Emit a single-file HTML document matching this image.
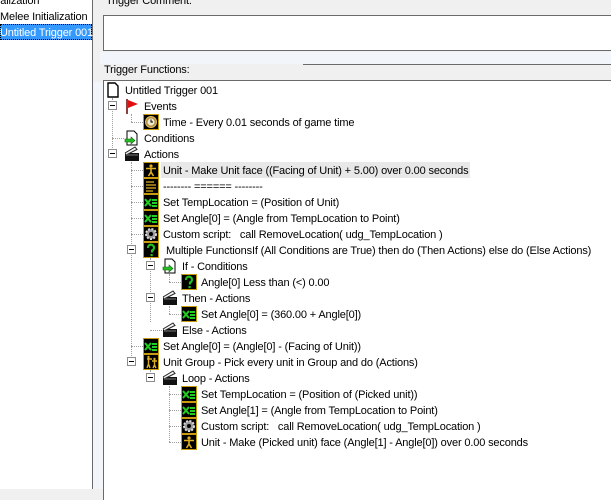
<!DOCTYPE html>
<html><head><meta charset="utf-8"><style>
*{margin:0;padding:0;box-sizing:border-box}
body{width:611px;height:489px;overflow:hidden;background:#f0f0f0;font-family:"Liberation Sans",Tahoma,sans-serif;font-size:11px;letter-spacing:-0.15px;color:#000;position:relative}
.abs{position:absolute}
.t{position:absolute;white-space:nowrap;line-height:16px;height:16px;padding-top:1px}
.ic{position:absolute;width:16px;height:16px}
.mb{position:absolute;width:9px;height:9px;border:1px solid #8c8c8c;background:#fff}
.mb:after{content:"";position:absolute;left:1px;top:3px;width:5px;height:1px;background:#000}
.vl{position:absolute;width:1px;border-left:1px dotted #a0a0a0}
.hl{position:absolute;height:1px;border-top:1px dotted #a0a0a0}
</style></head><body>
<svg width="0" height="0" style="position:absolute">
<defs>
<symbol id="box" viewBox="0 0 16 16"><rect x="0.5" y="0.5" width="15" height="15" fill="#000" stroke="#c89b10"/></symbol>
<symbol id="unit" viewBox="0 0 16 16"><use href="#box"/><circle cx="8" cy="4" r="1.6" fill="#e0b020"/><path d="M3 6.5h10M8 6v4M8 10l-2.5 4M8 10l2.5 4" stroke="#e0b020" stroke-width="1.6" fill="none"/></symbol>
<symbol id="com" viewBox="0 0 16 16"><use href="#box"/><path d="M3 4h8M3 7h10M3 10h10M3 13h7" stroke="#e0b020" stroke-width="1.2"/></symbol>
<symbol id="set" viewBox="0 0 16 16"><use href="#box"/><path d="M2 5l6 7M8 5l-6 7M9 6h5M9 9h5M9 12h5" stroke="#20d020" stroke-width="2"/></symbol>
<symbol id="gear" viewBox="0 0 16 16"><use href="#box"/><circle cx="8" cy="8" r="5" fill="#999" stroke="#ddd" stroke-dasharray="2 1.4" stroke-width="2"/><circle cx="8" cy="8" r="2" fill="#000"/></symbol>
<symbol id="q" viewBox="0 0 16 16"><use href="#box"/><path d="M5 6a3 3 0 1 1 4 2.5v2" stroke="#20c020" stroke-width="2.2" fill="none"/><rect x="7.5" y="12" width="2.2" height="2.2" fill="#20c020"/></symbol>
<symbol id="grp" viewBox="0 0 16 16"><use href="#box"/><path d="M4 5h5M5.5 4v6M5.5 10l-1.5 4M5.5 10l1.5 4M9 7h5M11.5 6v5M11.5 11l-1.5 3M11.5 11l1.5 3" stroke="#e0b020" stroke-width="1.4"/><circle cx="5.5" cy="3" r="1.2" fill="#e0b020"/><circle cx="11.5" cy="5" r="1.2" fill="#e0b020"/></symbol>
<symbol id="time" viewBox="0 0 16 16"><use href="#box"/><circle cx="8" cy="8" r="5.5" fill="#b08a40" stroke="#e8c060"/><circle cx="8" cy="8" r="3.6" fill="#f0e8d0"/><path d="M8 5.5V8h2" stroke="#000" fill="none"/></symbol>
<symbol id="clap" viewBox="0 0 16 16"><rect x="1" y="7" width="14" height="8" fill="#111"/><path d="M1 7l10-6 2 2.5-10 5" fill="#eee" stroke="#222"/><path d="M2 9h12" stroke="#777"/></symbol>
<symbol id="cond" viewBox="0 0 16 16"><path d="M3 1h7l3 3v11H3z" fill="#fff" stroke="#000"/><path d="M1 9h6V7l4 3.5-4 3.5v-2H1z" fill="#20c020" stroke="#106010" stroke-width=".6"/></symbol>
<symbol id="doc" viewBox="0 0 16 16"><path d="M3 1h7l3 3v11H3z" fill="#fff" stroke="#000" stroke-width="1.4"/></symbol>
<symbol id="flag" viewBox="0 0 16 16"><path d="M3 1v15" stroke="#600" stroke-width="1.5"/><path d="M4 2l10 4-10 4z" fill="#e01010"/></symbol>
</defs></svg>

<div class="abs" style="left:0;top:0;width:92px;height:489px;background:#fff"></div>
<div class="abs" style="left:92px;top:0;width:1px;height:489px;background:#6a6a6a"></div>
<div class="t" style="left:-2px;top:-8px">ialization</div>
<div class="t" style="left:0;top:8px">Melee Initialization</div>
<div class="abs" style="left:0;top:24px;width:92px;height:16px;background:#3399ff;outline:1px dotted #000;outline-offset:-1px"></div>
<div class="t" style="left:0;top:24px;color:#fff">Untitled Trigger 001</div>

<div class="t" style="left:106px;top:-8px">Trigger Comment:</div>
<div class="abs" style="left:103px;top:15px;width:520px;height:36px;background:#fff;border-top:1px solid #6a6a6a;border-left:1px solid #6a6a6a;border-bottom:1px solid #6a6a6a"></div>
<div class="abs" style="left:100px;top:52px;width:520px;height:12px;background:#f2f6fb"></div>
<div class="abs" style="left:303px;top:64px;width:320px;height:1px;background:#6a6a6a"></div>
<div class="t" style="left:104px;top:61px">Trigger Functions:</div>
<div class="abs" style="left:93px;top:82px;width:10px;height:407px;background:#f2f6fb"></div>
<div class="abs" style="left:103px;top:80px;width:520px;height:420px;background:#fff;border-top:1px solid #6a6a6a;border-left:1px solid #6a6a6a"></div>

<div class="vl" style="left:112px;top:98px;height:56px"></div>
<div class="vl" style="left:131px;top:162px;height:200px"></div>
<div class="vl" style="left:150px;top:258px;height:64px"></div>
<div class="vl" style="left:150px;top:370px;height:8px"></div>
<div class="vl" style="left:169px;top:274px;height:8px"></div>
<div class="vl" style="left:169px;top:306px;height:8px"></div>
<div class="vl" style="left:169px;top:386px;height:56px"></div>
<div class="hl" style="left:131px;top:122px;width:12px"></div>
<div class="vl" style="left:131px;top:114px;height:8px"></div>
<div class="hl" style="left:112px;top:138px;width:12px"></div>

<svg class="ic" style="left:105px;top:82px"><use href="#doc"/></svg><div class="t" style="left:125px;top:82px">Untitled Trigger 001</div>
<div class="mb" style="left:108px;top:101px"></div><svg class="ic" style="left:124px;top:98px"><use href="#flag"/></svg><div class="t" style="left:144px;top:98px">Events</div>
<svg class="ic" style="left:143px;top:114px"><use href="#time"/></svg><div class="t" style="left:163px;top:114px">Time - Every 0.01 seconds of game time</div>
<svg class="ic" style="left:124px;top:130px"><use href="#cond"/></svg><div class="t" style="left:144px;top:130px">Conditions</div>
<div class="mb" style="left:108px;top:149px"></div><svg class="ic" style="left:124px;top:146px"><use href="#clap"/></svg><div class="t" style="left:144px;top:146px">Actions</div>

<div class="hl" style="left:131px;top:170px;width:12px"></div><div class="hl" style="left:131px;top:186px;width:12px"></div><div class="hl" style="left:131px;top:202px;width:12px"></div><div class="hl" style="left:131px;top:218px;width:12px"></div><div class="hl" style="left:131px;top:234px;width:12px"></div><div class="hl" style="left:131px;top:346px;width:12px"></div>
<div class="abs" style="left:161px;top:162px;width:309px;height:16px;background:#e8e8e8"></div>
<svg class="ic" style="left:143px;top:162px"><use href="#unit"/></svg><div class="t" style="left:163px;top:162px">Unit - Make Unit face ((Facing of Unit) + 5.00) over 0.00 seconds</div>
<svg class="ic" style="left:143px;top:178px"><use href="#com"/></svg><div class="t" style="left:163px;top:178px">-------- ====== --------</div>
<svg class="ic" style="left:143px;top:194px"><use href="#set"/></svg><div class="t" style="left:163px;top:194px">Set TempLocation = (Position of Unit)</div>
<svg class="ic" style="left:143px;top:210px"><use href="#set"/></svg><div class="t" style="left:163px;top:210px">Set Angle[0] = (Angle from TempLocation to Point)</div>
<svg class="ic" style="left:143px;top:226px"><use href="#gear"/></svg><div class="t" style="left:163px;top:226px">Custom script: &nbsp; call RemoveLocation( udg_TempLocation )</div>
<div class="mb" style="left:127px;top:245px"></div><svg class="ic" style="left:143px;top:242px"><use href="#q"/></svg><div class="t" style="left:166px;top:242px">Multiple FunctionsIf (All Conditions are True) then do (Then Actions) else do (Else Actions)</div>
<div class="mb" style="left:146px;top:261px"></div><svg class="ic" style="left:162px;top:258px"><use href="#cond"/></svg><div class="t" style="left:182px;top:258px">If - Conditions</div>
<div class="hl" style="left:169px;top:282px;width:12px"></div><svg class="ic" style="left:181px;top:274px"><use href="#q"/></svg><div class="t" style="left:201px;top:274px">Angle[0] Less than (&lt;) 0.00</div>
<div class="mb" style="left:146px;top:293px"></div><svg class="ic" style="left:162px;top:290px"><use href="#clap"/></svg><div class="t" style="left:182px;top:290px">Then - Actions</div>
<div class="hl" style="left:169px;top:314px;width:12px"></div><svg class="ic" style="left:181px;top:306px"><use href="#set"/></svg><div class="t" style="left:201px;top:306px">Set Angle[0] = (360.00 + Angle[0])</div>
<div class="hl" style="left:150px;top:330px;width:12px"></div><svg class="ic" style="left:162px;top:322px"><use href="#clap"/></svg><div class="t" style="left:182px;top:322px">Else - Actions</div>
<svg class="ic" style="left:143px;top:338px"><use href="#set"/></svg><div class="t" style="left:163px;top:338px">Set Angle[0] = (Angle[0] - (Facing of Unit))</div>
<div class="mb" style="left:127px;top:357px"></div><svg class="ic" style="left:143px;top:354px"><use href="#grp"/></svg><div class="t" style="left:163px;top:354px">Unit Group - Pick every unit in Group and do (Actions)</div>
<div class="mb" style="left:146px;top:373px"></div><svg class="ic" style="left:162px;top:370px"><use href="#clap"/></svg><div class="t" style="left:182px;top:370px">Loop - Actions</div>
<div class="hl" style="left:169px;top:394px;width:12px"></div><div class="hl" style="left:169px;top:410px;width:12px"></div><div class="hl" style="left:169px;top:426px;width:12px"></div><div class="hl" style="left:169px;top:442px;width:12px"></div>
<svg class="ic" style="left:181px;top:386px"><use href="#set"/></svg><div class="t" style="left:201px;top:386px">Set TempLocation = (Position of (Picked unit))</div>
<svg class="ic" style="left:181px;top:402px"><use href="#set"/></svg><div class="t" style="left:201px;top:402px">Set Angle[1] = (Angle from TempLocation to Point)</div>
<svg class="ic" style="left:181px;top:418px"><use href="#gear"/></svg><div class="t" style="left:201px;top:418px">Custom script: &nbsp; call RemoveLocation( udg_TempLocation )</div>
<svg class="ic" style="left:181px;top:434px"><use href="#unit"/></svg><div class="t" style="left:201px;top:434px">Unit - Make (Picked unit) face (Angle[1] - Angle[0]) over 0.00 seconds</div>
</body></html>
